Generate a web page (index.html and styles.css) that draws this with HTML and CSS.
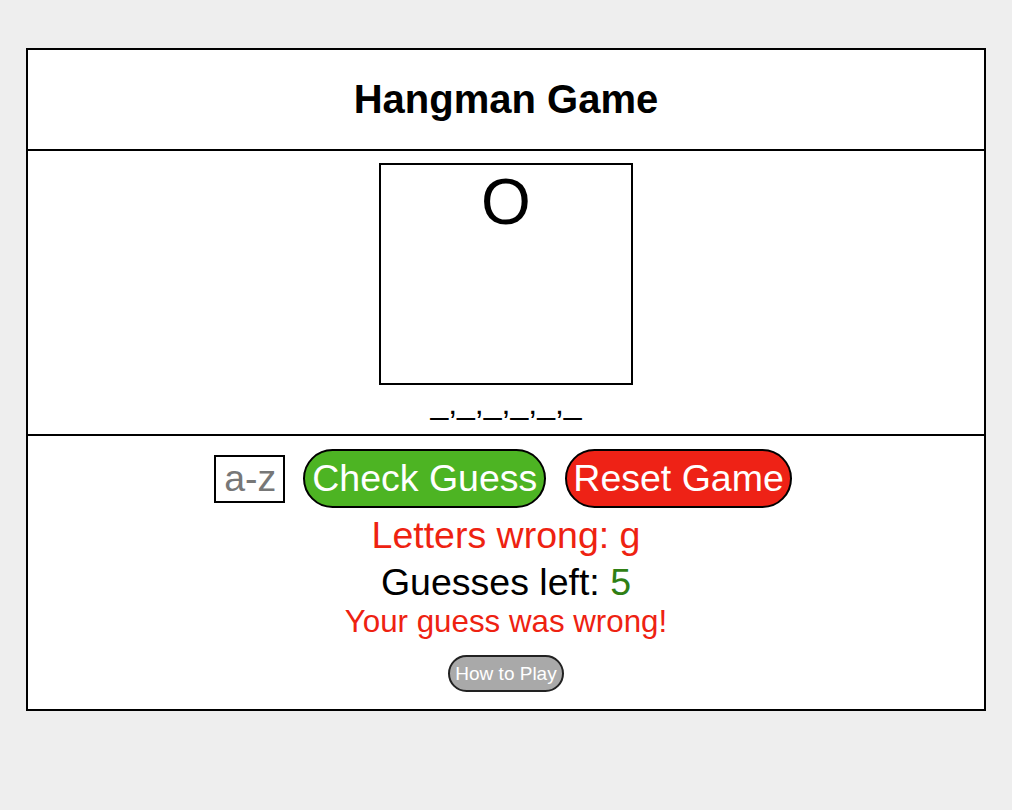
FILE: index.html
```html
<!DOCTYPE html>
<html lang="en">
<head>
<meta charset="utf-8">
<title>Hangman Game</title>
<link rel="stylesheet" href="styles.css">
</head>
<body>
<div class="game">
  <header class="game-header">
    <h1 class="title">Hangman Game</h1>
  </header>
  <section class="board">
    <div class="gallows">O</div>
    <div class="word">_,_,_,_,_,_</div>
  </section>
  <section class="controls">
    <div class="guess-row">
      <input class="letter-input" type="text" placeholder="a-z" maxlength="1">
      <button class="btn btn-check">Check Guess</button>
      <button class="btn btn-reset">Reset Game</button>
    </div>
    <div class="wrong">Letters wrong: g</div>
    <div class="left">Guesses left: <span class="left-count">5</span></div>
    <div class="message">Your guess was wrong!</div>
    <button class="btn-help">How to Play</button>
  </section>
</div>
</body>
</html>
```

FILE: styles.css
```css
html, body {
  margin: 0;
  padding: 0;
}

body {
  background: #eeeeee;
  font-family: "Liberation Sans", Arial, sans-serif;
  padding-top: 48px;
}

.game {
  box-sizing: border-box;
  width: 960px;
  margin: 0 auto;
  background: #ffffff;
  border: 2px solid #000000;
}

.game-header {
  height: 99px;
  display: flex;
  align-items: center;
  justify-content: center;
  border-bottom: 2px solid #000000;
}

.title {
  margin: 0;
  font-size: 40px;
  font-weight: bold;
  color: #000000;
}

.board {
  height: 285px;
  box-sizing: border-box;
  padding-top: 12px;
  display: flex;
  flex-direction: column;
  align-items: center;
  border-bottom: 2px solid #000000;
}

.gallows {
  width: 250px;
  height: 218px;
  border: 2px solid #000000;
  font-size: 64px;
  text-align: center;
  color: #000000;
}

.word {
  font-size: 32px;
  color: #000000;
}

.controls {
  height: 273px;
  box-sizing: border-box;
  padding-top: 13px;
  display: flex;
  flex-direction: column;
  align-items: center;
}

.guess-row {
  display: flex;
  align-items: center;
  justify-content: center;
  gap: 18px;
  height: 59px;
  padding-right: 6px;
}

.letter-input {
  box-sizing: border-box;
  width: 71px;
  height: 48px;
  border: 2px solid #000000;
  border-radius: 0;
  padding: 0 8px;
  font-family: "Liberation Sans", Arial, sans-serif;
  font-size: 37.5px;
  color: #000000;
  outline: none;
}

.letter-input::placeholder {
  color: #777777;
}

.btn {
  box-sizing: border-box;
  height: 59px;
  font-family: "Liberation Sans", Arial, sans-serif;
  font-size: 37.5px;
  line-height: 43px;
  color: #ffffff;
  border: 2px solid #000000;
  border-radius: 30px;
  padding: 6px 6px;
  cursor: pointer;
  white-space: nowrap;
}

.btn-check {
  background: #4db423;
  padding: 6px 7px;
}

.btn-reset {
  background: #ee2216;
  margin-left: 1px;
}

.wrong {
  margin-top: 6px;
  font-size: 37.5px;
  color: #ee2211;
}

.left {
  margin-top: 4px;
  font-size: 37.5px;
  color: #000000;
}

.left-count {
  color: #2f7f14;
}

.message {
  font-size: 31.3px;
  color: #ee2211;
}

.btn-help {
  margin-top: 15px;
  font-family: "Liberation Sans", Arial, sans-serif;
  font-size: 19px;
  line-height: 23px;
  color: #ffffff;
  background: #a9a9a9;
  border: 2px solid #222222;
  border-radius: 20px;
  padding: 5px 5px;
  cursor: pointer;
}
```
